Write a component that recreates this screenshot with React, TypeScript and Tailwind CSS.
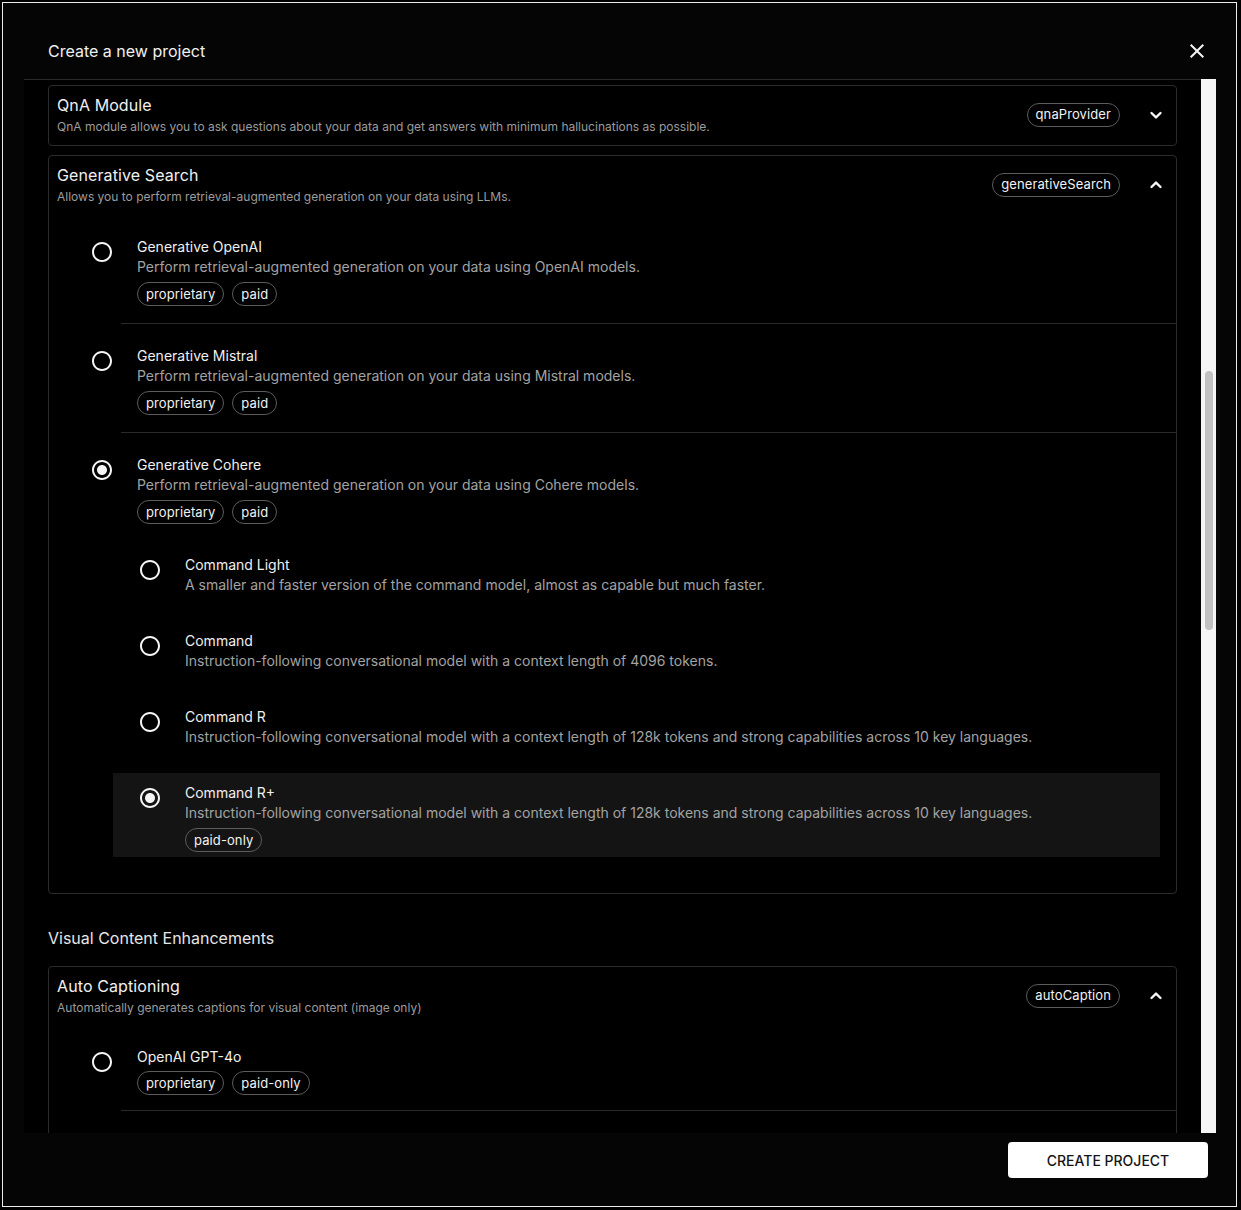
import React from "react";

const Chip = ({ label }: { label: string }) => (
  <span className="inline-flex h-[24px] items-center rounded-full border border-[#5c5c5c] px-[8px] text-[13px] leading-none tracking-[0.1px] text-[#f2f2f2]">
    {label}
  </span>
);

const Radio = ({ checked }: { checked?: boolean }) => (
  <svg width="24" height="24" viewBox="0 0 24 24" className="shrink-0 fill-[#f5f5f5]">
    <path d="M12 2C6.48 2 2 6.48 2 12s4.48 10 10 10 10-4.48 10-10S17.52 2 12 2zm0 18c-4.42 0-8-3.58-8-8s3.58-8 8-8 8 3.58 8 8-3.58 8-8 8z" />
    {checked && <path d="M12 7c-2.76 0-5 2.24-5 5s2.24 5 5 5 5-2.24 5-5-2.24-5-5-5z" />}
  </svg>
);

const Chevron = ({ up }: { up?: boolean }) => (
  <svg width="20" height="20" viewBox="0 0 20 20" fill="none" stroke="#f5f5f5" strokeWidth="2.4" strokeLinecap="round" strokeLinejoin="round">
    {up ? <path d="M5.5 12 10 7.6l4.5 4.4" /> : <path d="M5.5 8 10 12.4 14.5 8" />}
  </svg>
);

const CardHeader = ({
  title,
  desc,
  chip,
  up,
}: {
  title: string;
  desc: string;
  chip: string;
  up?: boolean;
}) => (
  <div className="flex items-center pl-[8px] pr-[10px] pt-[7px] pb-[9px]">
    <div className="flex-1">
      <div className="text-[16px] leading-[24px] tracking-[0.1px] text-[#f0f0f0]">{title}</div>
      <div className="mt-[1px] text-[12px] leading-[18px] text-[#9c9c9c]">{desc}</div>
    </div>
    <div className="flex items-center gap-[26px]">
      <Chip label={chip} />
      <Chevron up={up} />
    </div>
  </div>
);

type Sub = { title: string; desc: string; chips?: string[]; checked?: boolean };

const subs: Sub[] = [
  {
    title: "Command Light",
    desc: "A smaller and faster version of the command model, almost as capable but much faster.",
  },
  {
    title: "Command",
    desc: "Instruction-following conversational model with a context length of 4096 tokens.",
  },
  {
    title: "Command R",
    desc: "Instruction-following conversational model with a context length of 128k tokens and strong capabilities across 10 key languages.",
  },
  {
    title: "Command R+",
    desc: "Instruction-following conversational model with a context length of 128k tokens and strong capabilities across 10 key languages.",
    chips: ["paid-only"],
    checked: true,
  },
];

const SubItem = ({ s }: { s: Sub }) => (
  <div
    className={
      "flex items-start gap-[23px] pl-[25px] pt-[10px] " +
      (s.chips ? "pb-[5px] bg-[#141414]" : "pb-[26px]")
    }
  >
    <div className="mt-[3px]">
      <Radio checked={s.checked} />
    </div>
    <div>
      <div className="text-[14px] leading-[20px] text-[#f0f0f0]">{s.title}</div>
      <div className="text-[14px] leading-[20px] text-[#a3a3a3]">{s.desc}</div>
      {s.chips && (
        <div className="mt-[5px] flex gap-[8px]">
          {s.chips.map((c) => (
            <Chip key={c} label={c} />
          ))}
        </div>
      )}
    </div>
  </div>
);

const Option = ({
  title,
  desc,
  chips,
  checked,
  last,
  children,
}: {
  title: string;
  desc: string;
  chips: string[];
  checked?: boolean;
  last?: boolean;
  children?: React.ReactNode;
}) => (
  <div
    className={
      "ml-[72px] pt-[22px] " + (last ? "pb-[36px]" : "pb-[17px] border-b border-[#2a2a2a]")
    }
  >
    <div className="-ml-[31px] flex items-start gap-[23px]">
      <div className="mt-[3px]">
        <Radio checked={checked} />
      </div>
      <div>
        <div className="text-[14px] leading-[20px] text-[#f0f0f0]">{title}</div>
        <div className="text-[14px] leading-[20px] text-[#a3a3a3]">{desc}</div>
        <div className="mt-[5px] flex gap-[8px]">
          {chips.map((c) => (
            <Chip key={c} label={c} />
          ))}
        </div>
      </div>
    </div>
    {children}
  </div>
);

export default function App() {
  return (
    <div className="h-[1210px] w-[1241px] bg-black pl-[2px] pt-[2px]" style={{ fontFamily: "Inter, 'Noto Sans', sans-serif" }}>
      <div className="flex h-[1205px] w-[1235px] flex-col border border-[#ececec] bg-[#050505]">
        {/* Header */}
        <div className="flex items-center pl-[45px] pr-[27px] pt-[36px] pb-[16px]">
          <div className="flex-1 text-[16px] leading-[24px] text-[#f0f0f0]">
            Create a new project
          </div>
          <svg width="24" height="24" viewBox="0 0 24 24" className="fill-[#f5f5f5]">
            <path d="M19 6.41 17.59 5 12 10.59 6.41 5 5 6.41 10.59 12 5 17.59 6.41 19 12 13.41 17.59 19 19 17.59 13.41 12z" />
          </svg>
        </div>

        {/* Body */}
        <div className="ml-[21px] flex h-[1054px] w-[1192px]">
          <div className="flex-1 overflow-hidden border-t border-[#2a2a2a] bg-black px-[24px] pt-[5px]">
            <div className="flex flex-col gap-[9px]">
              <div className="rounded-[4px] border border-[#2b2b2b]">
                <CardHeader
                  title="QnA Module"
                  desc="QnA module allows you to ask questions about your data and get answers with minimum hallucinations as possible."
                  chip="qnaProvider"
                />
              </div>
              <div className="rounded-[4px] border border-[#2b2b2b]">
                <CardHeader
                  title="Generative Search"
                  desc="Allows you to perform retrieval-augmented generation on your data using LLMs."
                  chip="generativeSearch"
                  up
                />
                <Option
                  title="Generative OpenAI"
                  desc="Perform retrieval-augmented generation on your data using OpenAI models."
                  chips={["proprietary", "paid"]}
                />
                <Option
                  title="Generative Mistral"
                  desc="Perform retrieval-augmented generation on your data using Mistral models."
                  chips={["proprietary", "paid"]}
                />
                <Option
                  title="Generative Cohere"
                  desc="Perform retrieval-augmented generation on your data using Cohere models."
                  chips={["proprietary", "paid"]}
                  checked
                  last
                >
                  <div className="-ml-[8px] mr-[16px] mt-[21px]">
                    {subs.map((s) => (
                      <SubItem key={s.title} s={s} />
                    ))}
                  </div>
                </Option>
              </div>
            </div>

            <div className="mt-[32px] mb-[16px] text-[16px] leading-[24px] text-[#e6e6e6]">
              Visual Content Enhancements
            </div>

            <div className="rounded-[4px] border border-[#2b2b2b]">
              <CardHeader
                title="Auto Captioning"
                desc="Automatically generates captions for visual content (image only)"
                chip="autoCaption"
                up
              />
              <div className="ml-[72px] border-b border-[#2a2a2a] pt-[21px] pb-[15px]">
                <div className="-ml-[31px] flex items-start gap-[23px]">
                  <div className="mt-[3px]">
                    <Radio />
                  </div>
                  <div>
                    <div className="text-[14px] leading-[20px] text-[#f0f0f0]">OpenAI GPT-4o</div>
                    <div className="mt-[4px] flex gap-[8px]">
                      <Chip label="proprietary" />
                      <Chip label="paid-only" />
                    </div>
                  </div>
                </div>
              </div>
              <div className="h-[80px]" />
            </div>
          </div>

          {/* Scrollbar */}
          <div className="relative w-[15px] bg-[#f5f5f5]">
            <div className="absolute left-[4px] top-[292px] h-[259px] w-[8px] rounded-full bg-[#c1c1c1]" />
          </div>
        </div>

        {/* Footer */}
        <div className="flex justify-end pr-[28px] pt-[9px]">
          <button className="h-[36px] w-[200px] rounded-[4px] bg-white text-[14px] font-medium tracking-[0px] text-[#141414]">
            CREATE PROJECT
          </button>
        </div>
      </div>
    </div>
  );
}
